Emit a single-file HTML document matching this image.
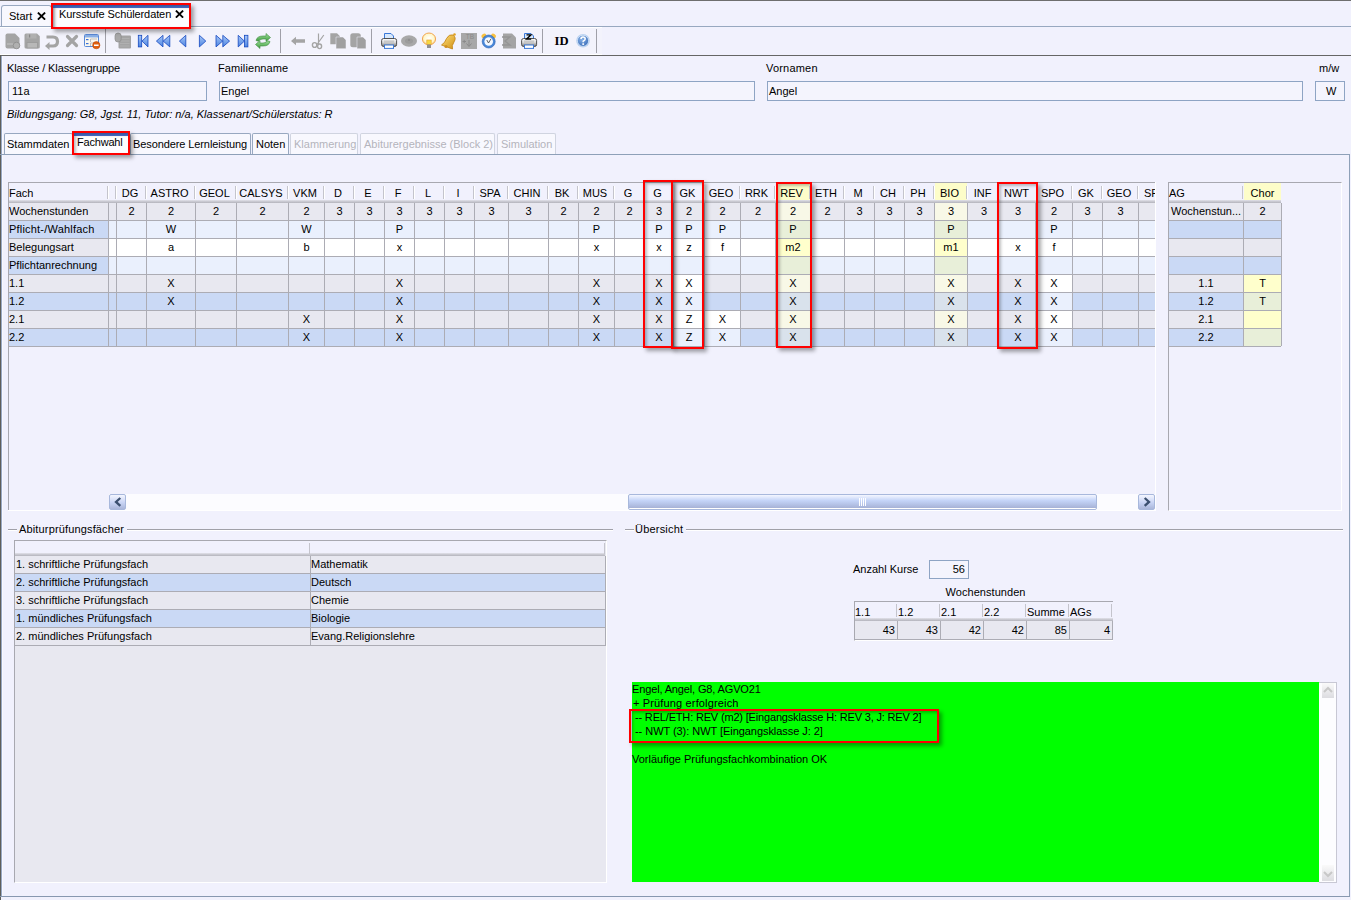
<!DOCTYPE html>
<html><head><meta charset="utf-8"><style>
html,body{margin:0;padding:0}
body{width:1351px;height:900px;position:relative;overflow:hidden;background:#f1f1fd;font-family:'Liberation Sans', sans-serif;font-size:11px;color:#000}
body div, body svg{position:absolute}
.t{white-space:nowrap;line-height:13px;height:13px}
</style></head><body>
<div style="left:0px;top:0px;width:1351px;height:1px;background:#6e6e6e;"></div>
<div style="left:0px;top:26px;width:1351px;height:1px;background:#98a8c0;"></div>
<div style="left:1px;top:5px;width:51px;height:21px;background:#f8f8fe;border:1px solid #98a8c0;border-bottom:none;border-radius:3px 3px 0 0;box-sizing:border-box"></div>
<div class="t" style="left:9px;top:10px;">Start</div>
<svg style="left:37px;top:12px" width="9" height="8" viewBox="0 0 9 8"><path d="M0.9 0.6L8.1 7.6M8.1 0.6L0.9 7.6" stroke="#000" stroke-width="1.9"/></svg>
<div style="left:53px;top:5px;width:136px;height:22px;background:#fdfdff;border-top:3px solid #4a70d0;box-sizing:border-box;box-shadow:inset 3px 0 3px -2px rgba(0,0,0,.25)"></div>
<div class="t" style="left:59px;top:8px;letter-spacing:-0.1px">Kursstufe Schülerdaten</div>
<svg style="left:175px;top:10px" width="9" height="8" viewBox="0 0 9 8"><path d="M0.9 0.6L8.1 7.6M8.1 0.6L0.9 7.6" stroke="#000" stroke-width="1.9"/></svg>
<div style="left:0px;top:27px;width:602px;height:28px;background:#f3f3fc;"></div>
<div style="left:0px;top:27px;width:602px;height:1px;background:#ffffff;"></div>
<div style="left:0px;top:54px;width:602px;height:1px;background:#ffffff;"></div>
<div style="left:0px;top:55px;width:1351px;height:1px;background:#666;"></div>
<div style="left:105px;top:29px;width:1px;height:24px;background:#a0a0a8;"></div>
<div style="left:280px;top:29px;width:1px;height:24px;background:#a0a0a8;"></div>
<div style="left:371px;top:29px;width:1px;height:24px;background:#a0a0a8;"></div>
<div style="left:542px;top:29px;width:1px;height:24px;background:#a0a0a8;"></div>
<div style="left:596px;top:29px;width:1px;height:24px;background:#a0a0a8;"></div>
<svg style="left:0;top:0" width="620" height="56" viewBox="0 0 620 56"><defs><linearGradient id="bl" x1="0" y1="0" x2="0" y2="1"><stop offset="0" stop-color="#a8c8f8"/><stop offset="1" stop-color="#4c84e0"/></linearGradient><linearGradient id="gr" x1="0" y1="0" x2="0" y2="1"><stop offset="0" stop-color="#9ee09a"/><stop offset="1" stop-color="#3c9a3c"/></linearGradient><radialGradient id="bulb" cx="0.5" cy="0.45" r="0.55"><stop offset="0" stop-color="#ffffff"/><stop offset="0.7" stop-color="#fff6c8"/><stop offset="1" stop-color="#f8c870"/></radialGradient><linearGradient id="gold" x1="0" y1="0" x2="1" y2="1"><stop offset="0" stop-color="#ffe080"/><stop offset="1" stop-color="#d09010"/></linearGradient><linearGradient id="prn" x1="0" y1="0" x2="0" y2="1"><stop offset="0" stop-color="#ffffff"/><stop offset="0.5" stop-color="#d8d8d8"/><stop offset="1" stop-color="#707070"/></linearGradient><radialGradient id="help" cx="0.4" cy="0.35" r="0.7"><stop offset="0" stop-color="#8ab4e8"/><stop offset="1" stop-color="#3a6cb8"/></radialGradient></defs><path d="M5.5 35.5 Q5.5 33.5 7.5 33.5 H15 L19.5 38 V46.5 Q19.5 48.5 17.5 48.5 H7.5 Q5.5 48.5 5.5 46.5 Z" fill="#a4a4a4"/><rect x="7" y="43" width="7" height="2" fill="#b4b4b4"/><circle cx="16.5" cy="45.5" r="3.3" fill="#b0b0b0" stroke="#8c8c8c" stroke-width="0.8"/><path d="M24.5 35 Q24.5 33.5 26 33.5 H37 L39.8 36.3 V47 Q39.8 48.6 38.3 48.6 H26 Q24.5 48.6 24.5 47 Z" fill="#a4a4a4"/><rect x="26.5" y="34" width="10" height="4.5" fill="#b0b0b0"/><rect x="29" y="34.5" width="1.2" height="3" fill="#888"/><rect x="27" y="42.5" width="10.5" height="5.5" fill="#b8b8b8" stroke="#9a9a9a" stroke-width="0.8"/><path d="M46.5 37 H53 Q57.5 37 57.5 41.5 Q57.5 46 53 46 H48.5" stroke="#a4a4a4" stroke-width="3.2" fill="none"/><path d="M45 46 L49.5 42 V50 Z" fill="#a4a4a4"/><path d="M67.5 36.5 L76.5 45.5 M76.5 36.5 L67.5 45.5" stroke="#a4a4a4" stroke-width="3.2" stroke-linecap="round"/><rect x="84.5" y="34.5" width="14" height="12" rx="1" fill="#fbf8ee" stroke="#5a8ad8" stroke-width="1"/><rect x="85" y="35" width="13" height="2.5" fill="#8ab0e8"/><rect x="86" y="39" width="2.5" height="1.2" fill="#3a70d8"/><rect x="86" y="43" width="2.5" height="1.2" fill="#3a70d8"/><path d="M90.5 42 V39 H97" stroke="#b8b8b8" stroke-width="0.9" fill="none"/><path d="M90.5 46 V43 H94" stroke="#b8b8b8" stroke-width="0.9" fill="none"/><circle cx="96.3" cy="45.2" r="3.6" fill="#e06010" stroke="#c04800" stroke-width="0.6"/><rect x="94" y="44.5" width="4.6" height="1.5" fill="#fff"/><rect x="118.5" y="35.5" width="12.5" height="13" rx="1" fill="#a4a4a4"/><path d="M120 38.5H129.5M120 41H129.5M120 43.5H129.5M120 46H129.5" stroke="#b4b4b4" stroke-width="0.8"/><rect x="115" y="33" width="6.2" height="9" rx="3" fill="#a8a8a8" stroke="#8c8c8c" stroke-width="0.7"/><rect x="138.3" y="35.3" width="3.4" height="11.6" fill="url(#bl)" stroke="#1448c0" stroke-width="0.8"/><path d="M148 35.3 V46.9 L142 41.1 Z" fill="url(#bl)" stroke="#1448c0" stroke-width="0.8" stroke-linejoin="round"/><path d="M163 35.3 V46.9 L156.4 41.1 Z M169.8 35.3 V46.9 L163.2 41.1 Z" fill="url(#bl)" stroke="#1448c0" stroke-width="0.8" stroke-linejoin="round"/><path d="M185.8 35.3 V46.9 L179.4 41.1 Z" fill="url(#bl)" stroke="#1448c0" stroke-width="0.8" stroke-linejoin="round"/><path d="M199.4 35.3 V46.9 L205.8 41.1 Z" fill="url(#bl)" stroke="#1448c0" stroke-width="0.8" stroke-linejoin="round"/><path d="M216 35.3 V46.9 L222.6 41.1 Z M222.8 35.3 V46.9 L229.6 41.1 Z" fill="url(#bl)" stroke="#1448c0" stroke-width="0.8" stroke-linejoin="round"/><path d="M238.2 35.3 V46.9 L244.4 41.1 Z" fill="url(#bl)" stroke="#1448c0" stroke-width="0.8" stroke-linejoin="round"/><rect x="244.5" y="35.3" width="3.4" height="11.6" fill="url(#bl)" stroke="#1448c0" stroke-width="0.8"/><path d="M256 40.5 Q257 36 263 36 H266 V33.5 L270.5 37.5 L266 41.5 V39 H263 Q259.5 39 258.5 41.2 Z" fill="url(#gr)" stroke="#3c8a3c" stroke-width="0.6"/><path d="M270 41.5 Q269 46 263 46 H260 V48.5 L255.5 44.5 L260 40.5 V43 H263 Q266.5 43 267.5 40.8 Z" fill="url(#gr)" stroke="#3c8a3c" stroke-width="0.6"/><path d="M291 41 L296 36.8 V39.2 H305 V42.8 H296 V45.2 Z" fill="#a4a4a4"/><path d="M318.5 33.5 V44 M323.8 35 L317 44.5" stroke="#a4a4a4" stroke-width="1.2" fill="none"/><ellipse cx="314.6" cy="45" rx="2.2" ry="2.4" fill="none" stroke="#a4a4a4" stroke-width="1.4"/><ellipse cx="319.6" cy="46.3" rx="2" ry="2.3" fill="none" stroke="#a4a4a4" stroke-width="1.4"/><path d="M330.3 33.3 H337 L340 36.3 V44.3 H330.3 Z" fill="#a4a4a4"/><path d="M336 37 H343 L346 40 V48.7 H336 Z" fill="#a0a0a0" stroke="#f2f2fc" stroke-width="0.5"/><rect x="350.3" y="33.3" width="10.5" height="14" rx="2.5" fill="#a4a4a4"/><path d="M357 37 H363 L366 40 V48.7 H357 Z" fill="#a0a0a0" stroke="#f2f2fc" stroke-width="0.5"/><path d="M384.5 33.5 H391 L393.5 36 V41 H384.5 Z" fill="#d8e8fc" stroke="#3a78d8" stroke-width="1"/><rect x="381.6" y="38.5" width="15" height="8" rx="2" fill="url(#prn)" stroke="#404040" stroke-width="0.9"/><rect x="384" y="40.5" width="10" height="2.5" fill="#c8c8c8"/><rect x="384.5" y="45" width="9" height="3.4" fill="#ffffff" stroke="#3a78d8" stroke-width="1"/><ellipse cx="409" cy="41" rx="8" ry="5.8" fill="#a8a8a8"/><ellipse cx="409" cy="41" rx="4" ry="2.8" fill="#9c9c9c"/><circle cx="409" cy="40" r="0.8" fill="#808080"/><ellipse cx="429" cy="39" rx="6.6" ry="6" fill="url(#bulb)" stroke="#f0a048" stroke-width="0.9"/><rect x="426.8" y="40" width="4.4" height="4.5" fill="#f8d840" stroke="#e8a030" stroke-width="0.6"/><rect x="427" y="44.5" width="4" height="3.5" fill="#909090"/><path d="M441.5 45 Q445 43 446.5 38.5 Q449 33.8 453 35 Q456.8 37.5 454 42 Q451.5 45.5 452.5 49 Z" fill="url(#gold)" stroke="#c08010" stroke-width="0.8"/><circle cx="454.5" cy="34.5" r="1.3" fill="#e0a020"/><circle cx="446" cy="46.5" r="1.6" fill="#d09020"/><rect x="461" y="33" width="16" height="16" fill="#a8a8a8"/><text x="470" y="39.3" font-family="Liberation Sans" font-size="6.5" text-anchor="middle" fill="#888">TB</text><path d="M469 40 V46 M466.5 43.5 L469 46.5 L471.5 43.5 M462.5 41.5 H466 M464.2 39.8 V43.2" stroke="#8a8a8a" stroke-width="1" fill="none"/><ellipse cx="483.8" cy="35.8" rx="2.6" ry="2" fill="#f8c040" transform="rotate(-35 483.8 35.8)"/><ellipse cx="493.6" cy="35.8" rx="2.6" ry="2" fill="#f8c040" transform="rotate(35 493.6 35.8)"/><circle cx="488.7" cy="41.5" r="6.5" fill="#4a88d8" stroke="#2a60b0" stroke-width="0.6"/><circle cx="488.7" cy="41.5" r="4.3" fill="#f4f8ff"/><path d="M486.8 40 L488.5 43 L491 38.8" stroke="#505050" stroke-width="0.9" fill="none"/><path d="M503 33.5 H512 L516 37.5 V48.5 H503 Z" fill="#a4a4a4"/><path d="M502 37 H510 L505 41 L510 45 H502" stroke="#949494" stroke-width="1.3" fill="none"/><path d="M524.5 33.5 H531 L533.5 36 V41 H524.5 Z" fill="#d8e8fc" stroke="#3a78d8" stroke-width="1"/><rect x="521.6" y="38.5" width="15" height="8" rx="2" fill="url(#prn)" stroke="#404040" stroke-width="0.9"/><path d="M526.5 34.8 H531 L526.5 39.2 H531.2" stroke="#000" stroke-width="1.3" fill="none"/><rect x="524" y="40.5" width="10" height="2.5" fill="#c8c8c8"/><rect x="524.5" y="45" width="9" height="3.4" fill="#ffffff" stroke="#3a78d8" stroke-width="1"/><text x="554.6" y="45.4" font-family="Liberation Serif" font-weight="bold" font-size="12.6" fill="#000">ID</text><circle cx="583" cy="40.8" r="6.8" fill="#b8d0f0"/><circle cx="583" cy="40.8" r="5.6" fill="url(#help)" stroke="#d8e8fa" stroke-width="0.8"/><path d="M581 39 Q581 37 583 37 Q585.2 37 585.2 39 Q585.2 40.3 583.2 41.2 V42.3" stroke="#fff" stroke-width="1.5" fill="none"/><rect x="582.3" y="43.3" width="1.8" height="1.6" fill="#fff"/></svg>
<div style="left:0px;top:55px;width:1px;height:845px;background:#5e5e5a;"></div>
<div style="left:1px;top:56px;width:1px;height:840px;background:#98a8c4;"></div>
<div style="left:2px;top:56px;width:1px;height:840px;background:#f8f8ff;"></div>
<div class="t" style="left:7px;top:62px;letter-spacing:-0.12px">Klasse / Klassengruppe</div>
<div class="t" style="left:218px;top:62px;letter-spacing:0.1px">Familienname</div>
<div class="t" style="left:766px;top:62px;letter-spacing:0.2px">Vornamen</div>
<div class="t" style="left:1319px;top:62px;">m/w</div>
<div style="left:8px;top:81px;width:199px;height:20px;border:1px solid #8ea4c4;box-sizing:border-box;background:#f4f4fd"></div>
<div style="left:219px;top:81px;width:536px;height:20px;border:1px solid #8ea4c4;box-sizing:border-box;background:#f4f4fd"></div>
<div style="left:767px;top:81px;width:536px;height:20px;border:1px solid #8ea4c4;box-sizing:border-box;background:#f4f4fd"></div>
<div style="left:1315px;top:81px;width:30px;height:20px;border:1px solid #8ea4c4;box-sizing:border-box;background:#f4f4fd"></div>
<div class="t" style="left:12px;top:85px;">11a</div>
<div class="t" style="left:221px;top:85px;">Engel</div>
<div class="t" style="left:769px;top:85px;">Angel</div>
<div class="t" style="left:1326px;top:85px;">W</div>
<div class="t" style="left:7px;top:108px;"><i>Bildungsgang: G8, Jgst. 11, Tutor: n/a, Klassenart/Schülerstatus: R</i></div>
<div style="left:0px;top:154px;width:1350px;height:1px;background:#8ea0b8;"></div>
<div style="left:1349px;top:154px;width:1px;height:743px;background:#8ea0b8;"></div>
<div style="left:0px;top:896px;width:1350px;height:1px;background:#8898b0;"></div>
<div style="left:4px;top:133px;width:69px;height:21px;border:1px solid #98a8c0;border-bottom:none;border-radius:2px 2px 0 0;box-sizing:border-box;background:#f8f8fe"></div>
<div style="left:130px;top:133px;width:121px;height:21px;border:1px solid #98a8c0;border-bottom:none;border-radius:2px 2px 0 0;box-sizing:border-box;background:#f8f8fe"></div>
<div style="left:252px;top:133px;width:37px;height:21px;border:1px solid #98a8c0;border-bottom:none;border-radius:2px 2px 0 0;box-sizing:border-box;background:#f8f8fe"></div>
<div style="left:290px;top:133px;width:68px;height:21px;border:1px solid #d0d4e0;border-bottom:none;border-radius:2px 2px 0 0;box-sizing:border-box;background:#f8f8fe"></div>
<div style="left:360px;top:133px;width:135px;height:21px;border:1px solid #d0d4e0;border-bottom:none;border-radius:2px 2px 0 0;box-sizing:border-box;background:#f8f8fe"></div>
<div style="left:497px;top:133px;width:59px;height:21px;border:1px solid #d0d4e0;border-bottom:none;border-radius:2px 2px 0 0;box-sizing:border-box;background:#f8f8fe"></div>
<div style="left:74px;top:133px;width:55px;height:22px;background:#fdfdff;border-top:3px solid #4a70d0;box-sizing:border-box"></div>
<div class="t" style="left:7px;top:138px;">Stammdaten</div>
<div class="t" style="left:77px;top:136px;letter-spacing:-0.2px">Fachwahl</div>
<div class="t" style="left:133px;top:138px;letter-spacing:-0.1px">Besondere Lernleistung</div>
<div class="t" style="left:256px;top:138px;">Noten</div>
<div class="t" style="left:294px;top:138px;color:#b4b4bc">Klammerung</div>
<div class="t" style="left:364px;top:138px;color:#b4b4bc">Abiturergebnisse (Block 2)</div>
<div class="t" style="left:501px;top:138px;color:#b4b4bc">Simulation</div>
<div style="left:8px;top:182px;width:1147px;height:328px;overflow:hidden;background:#f1f1fd">
<div style="left:0px;top:0px;width:1147px;height:18px;background:#f1f1fd;"></div>
<div style="left:0;top:18px;width:1147px;height:3px;background:linear-gradient(#e2e2ea,#c4c4cc 60%,#b4b4bc)"></div>
<div style="left:0px;top:21px;width:100px;height:17px;background:#e8e8f0"></div>
<div class="t" style="left:1px;top:23px">Wochenstunden</div>
<div style="left:0px;top:39px;width:100px;height:17px;background:#cad9f5"></div>
<div class="t" style="left:1px;top:41px"><span style="letter-spacing:0.2px">Pflicht-/Wahlfach</span></div>
<div style="left:0px;top:57px;width:100px;height:17px;background:#e8e8f0"></div>
<div class="t" style="left:1px;top:59px">Belegungsart</div>
<div style="left:0px;top:75px;width:100px;height:17px;background:#cad9f5"></div>
<div class="t" style="left:1px;top:77px">Pflichtanrechnung</div>
<div style="left:0px;top:93px;width:100px;height:17px;background:#e8e8f0"></div>
<div class="t" style="left:1px;top:95px">1.1</div>
<div style="left:0px;top:111px;width:100px;height:17px;background:#cad9f5"></div>
<div class="t" style="left:1px;top:113px">1.2</div>
<div style="left:0px;top:129px;width:100px;height:17px;background:#e8e8f0"></div>
<div class="t" style="left:1px;top:131px">2.1</div>
<div style="left:0px;top:147px;width:100px;height:17px;background:#cad9f5"></div>
<div class="t" style="left:1px;top:149px">2.2</div>
<div class="t" style="left:1px;top:5px">Fach</div>
<div style="left:99px;top:4px;width:1px;height:13px;background:#c4c4cc"></div>
<div style="left:100px;top:4px;width:1px;height:13px;background:#ffffff"></div>
<div style="left:100px;top:21px;width:8px;height:17px;background:#e8e8f0"></div>
<div style="left:100px;top:39px;width:8px;height:17px;background:#eaf0fd"></div>
<div style="left:100px;top:57px;width:8px;height:17px;background:#ffffff"></div>
<div style="left:100px;top:75px;width:8px;height:17px;background:#eaf0fd"></div>
<div style="left:100px;top:93px;width:8px;height:17px;background:#e8e8f0"></div>
<div style="left:100px;top:111px;width:8px;height:17px;background:#cad9f5"></div>
<div style="left:100px;top:129px;width:8px;height:17px;background:#e8e8f0"></div>
<div style="left:100px;top:147px;width:8px;height:17px;background:#cad9f5"></div>
<div style="left:107px;top:4px;width:1px;height:13px;background:#c4c4cc"></div>
<div style="left:108px;top:4px;width:1px;height:13px;background:#ffffff"></div>
<div style="left:108px;top:21px;width:30px;height:17px;background:#e8e8f0"></div>
<div class="t" style="left:109px;top:23px;width:29px;text-align:center;">2</div>
<div style="left:108px;top:39px;width:30px;height:17px;background:#eaf0fd"></div>
<div style="left:108px;top:57px;width:30px;height:17px;background:#ffffff"></div>
<div style="left:108px;top:75px;width:30px;height:17px;background:#eaf0fd"></div>
<div style="left:108px;top:93px;width:30px;height:17px;background:#e8e8f0"></div>
<div style="left:108px;top:111px;width:30px;height:17px;background:#cad9f5"></div>
<div style="left:108px;top:129px;width:30px;height:17px;background:#e8e8f0"></div>
<div style="left:108px;top:147px;width:30px;height:17px;background:#cad9f5"></div>
<div class="t" style="left:107px;top:5px;width:30px;text-align:center;">DG</div>
<div style="left:137px;top:4px;width:1px;height:13px;background:#c4c4cc"></div>
<div style="left:138px;top:4px;width:1px;height:13px;background:#ffffff"></div>
<div style="left:138px;top:21px;width:49px;height:17px;background:#e8e8f0"></div>
<div class="t" style="left:139px;top:23px;width:48px;text-align:center;">2</div>
<div style="left:138px;top:39px;width:49px;height:17px;background:#eaf0fd"></div>
<div class="t" style="left:139px;top:41px;width:48px;text-align:center;">W</div>
<div style="left:138px;top:57px;width:49px;height:17px;background:#ffffff"></div>
<div class="t" style="left:139px;top:59px;width:48px;text-align:center;">a</div>
<div style="left:138px;top:75px;width:49px;height:17px;background:#eaf0fd"></div>
<div style="left:138px;top:93px;width:49px;height:17px;background:#e8e8f0"></div>
<div class="t" style="left:139px;top:95px;width:48px;text-align:center;">X</div>
<div style="left:138px;top:111px;width:49px;height:17px;background:#cad9f5"></div>
<div class="t" style="left:139px;top:113px;width:48px;text-align:center;">X</div>
<div style="left:138px;top:129px;width:49px;height:17px;background:#e8e8f0"></div>
<div style="left:138px;top:147px;width:49px;height:17px;background:#cad9f5"></div>
<div class="t" style="left:137px;top:5px;width:49px;text-align:center;">ASTRO</div>
<div style="left:186px;top:4px;width:1px;height:13px;background:#c4c4cc"></div>
<div style="left:187px;top:4px;width:1px;height:13px;background:#ffffff"></div>
<div style="left:187px;top:21px;width:41px;height:17px;background:#e8e8f0"></div>
<div class="t" style="left:188px;top:23px;width:40px;text-align:center;">2</div>
<div style="left:187px;top:39px;width:41px;height:17px;background:#eaf0fd"></div>
<div style="left:187px;top:57px;width:41px;height:17px;background:#ffffff"></div>
<div style="left:187px;top:75px;width:41px;height:17px;background:#eaf0fd"></div>
<div style="left:187px;top:93px;width:41px;height:17px;background:#e8e8f0"></div>
<div style="left:187px;top:111px;width:41px;height:17px;background:#cad9f5"></div>
<div style="left:187px;top:129px;width:41px;height:17px;background:#e8e8f0"></div>
<div style="left:187px;top:147px;width:41px;height:17px;background:#cad9f5"></div>
<div class="t" style="left:186px;top:5px;width:41px;text-align:center;">GEOL</div>
<div style="left:227px;top:4px;width:1px;height:13px;background:#c4c4cc"></div>
<div style="left:228px;top:4px;width:1px;height:13px;background:#ffffff"></div>
<div style="left:228px;top:21px;width:52px;height:17px;background:#e8e8f0"></div>
<div class="t" style="left:229px;top:23px;width:51px;text-align:center;">2</div>
<div style="left:228px;top:39px;width:52px;height:17px;background:#eaf0fd"></div>
<div style="left:228px;top:57px;width:52px;height:17px;background:#ffffff"></div>
<div style="left:228px;top:75px;width:52px;height:17px;background:#eaf0fd"></div>
<div style="left:228px;top:93px;width:52px;height:17px;background:#e8e8f0"></div>
<div style="left:228px;top:111px;width:52px;height:17px;background:#cad9f5"></div>
<div style="left:228px;top:129px;width:52px;height:17px;background:#e8e8f0"></div>
<div style="left:228px;top:147px;width:52px;height:17px;background:#cad9f5"></div>
<div class="t" style="left:227px;top:5px;width:52px;text-align:center;">CALSYS</div>
<div style="left:279px;top:4px;width:1px;height:13px;background:#c4c4cc"></div>
<div style="left:280px;top:4px;width:1px;height:13px;background:#ffffff"></div>
<div style="left:280px;top:21px;width:36px;height:17px;background:#e8e8f0"></div>
<div class="t" style="left:281px;top:23px;width:35px;text-align:center;">2</div>
<div style="left:280px;top:39px;width:36px;height:17px;background:#eaf0fd"></div>
<div class="t" style="left:281px;top:41px;width:35px;text-align:center;">W</div>
<div style="left:280px;top:57px;width:36px;height:17px;background:#ffffff"></div>
<div class="t" style="left:281px;top:59px;width:35px;text-align:center;">b</div>
<div style="left:280px;top:75px;width:36px;height:17px;background:#eaf0fd"></div>
<div style="left:280px;top:93px;width:36px;height:17px;background:#e8e8f0"></div>
<div style="left:280px;top:111px;width:36px;height:17px;background:#cad9f5"></div>
<div style="left:280px;top:129px;width:36px;height:17px;background:#e8e8f0"></div>
<div class="t" style="left:281px;top:131px;width:35px;text-align:center;">X</div>
<div style="left:280px;top:147px;width:36px;height:17px;background:#cad9f5"></div>
<div class="t" style="left:281px;top:149px;width:35px;text-align:center;">X</div>
<div class="t" style="left:279px;top:5px;width:36px;text-align:center;">VKM</div>
<div style="left:315px;top:4px;width:1px;height:13px;background:#c4c4cc"></div>
<div style="left:316px;top:4px;width:1px;height:13px;background:#ffffff"></div>
<div style="left:316px;top:21px;width:30px;height:17px;background:#e8e8f0"></div>
<div class="t" style="left:317px;top:23px;width:29px;text-align:center;">3</div>
<div style="left:316px;top:39px;width:30px;height:17px;background:#eaf0fd"></div>
<div style="left:316px;top:57px;width:30px;height:17px;background:#ffffff"></div>
<div style="left:316px;top:75px;width:30px;height:17px;background:#eaf0fd"></div>
<div style="left:316px;top:93px;width:30px;height:17px;background:#e8e8f0"></div>
<div style="left:316px;top:111px;width:30px;height:17px;background:#cad9f5"></div>
<div style="left:316px;top:129px;width:30px;height:17px;background:#e8e8f0"></div>
<div style="left:316px;top:147px;width:30px;height:17px;background:#cad9f5"></div>
<div class="t" style="left:315px;top:5px;width:30px;text-align:center;">D</div>
<div style="left:345px;top:4px;width:1px;height:13px;background:#c4c4cc"></div>
<div style="left:346px;top:4px;width:1px;height:13px;background:#ffffff"></div>
<div style="left:346px;top:21px;width:30px;height:17px;background:#e8e8f0"></div>
<div class="t" style="left:347px;top:23px;width:29px;text-align:center;">3</div>
<div style="left:346px;top:39px;width:30px;height:17px;background:#eaf0fd"></div>
<div style="left:346px;top:57px;width:30px;height:17px;background:#ffffff"></div>
<div style="left:346px;top:75px;width:30px;height:17px;background:#eaf0fd"></div>
<div style="left:346px;top:93px;width:30px;height:17px;background:#e8e8f0"></div>
<div style="left:346px;top:111px;width:30px;height:17px;background:#cad9f5"></div>
<div style="left:346px;top:129px;width:30px;height:17px;background:#e8e8f0"></div>
<div style="left:346px;top:147px;width:30px;height:17px;background:#cad9f5"></div>
<div class="t" style="left:345px;top:5px;width:30px;text-align:center;">E</div>
<div style="left:375px;top:4px;width:1px;height:13px;background:#c4c4cc"></div>
<div style="left:376px;top:4px;width:1px;height:13px;background:#ffffff"></div>
<div style="left:376px;top:21px;width:30px;height:17px;background:#e8e8f0"></div>
<div class="t" style="left:377px;top:23px;width:29px;text-align:center;">3</div>
<div style="left:376px;top:39px;width:30px;height:17px;background:#eaf0fd"></div>
<div class="t" style="left:377px;top:41px;width:29px;text-align:center;">P</div>
<div style="left:376px;top:57px;width:30px;height:17px;background:#ffffff"></div>
<div class="t" style="left:377px;top:59px;width:29px;text-align:center;">x</div>
<div style="left:376px;top:75px;width:30px;height:17px;background:#eaf0fd"></div>
<div style="left:376px;top:93px;width:30px;height:17px;background:#e8e8f0"></div>
<div class="t" style="left:377px;top:95px;width:29px;text-align:center;">X</div>
<div style="left:376px;top:111px;width:30px;height:17px;background:#cad9f5"></div>
<div class="t" style="left:377px;top:113px;width:29px;text-align:center;">X</div>
<div style="left:376px;top:129px;width:30px;height:17px;background:#e8e8f0"></div>
<div class="t" style="left:377px;top:131px;width:29px;text-align:center;">X</div>
<div style="left:376px;top:147px;width:30px;height:17px;background:#cad9f5"></div>
<div class="t" style="left:377px;top:149px;width:29px;text-align:center;">X</div>
<div class="t" style="left:375px;top:5px;width:30px;text-align:center;">F</div>
<div style="left:405px;top:4px;width:1px;height:13px;background:#c4c4cc"></div>
<div style="left:406px;top:4px;width:1px;height:13px;background:#ffffff"></div>
<div style="left:406px;top:21px;width:30px;height:17px;background:#e8e8f0"></div>
<div class="t" style="left:407px;top:23px;width:29px;text-align:center;">3</div>
<div style="left:406px;top:39px;width:30px;height:17px;background:#eaf0fd"></div>
<div style="left:406px;top:57px;width:30px;height:17px;background:#ffffff"></div>
<div style="left:406px;top:75px;width:30px;height:17px;background:#eaf0fd"></div>
<div style="left:406px;top:93px;width:30px;height:17px;background:#e8e8f0"></div>
<div style="left:406px;top:111px;width:30px;height:17px;background:#cad9f5"></div>
<div style="left:406px;top:129px;width:30px;height:17px;background:#e8e8f0"></div>
<div style="left:406px;top:147px;width:30px;height:17px;background:#cad9f5"></div>
<div class="t" style="left:405px;top:5px;width:30px;text-align:center;">L</div>
<div style="left:435px;top:4px;width:1px;height:13px;background:#c4c4cc"></div>
<div style="left:436px;top:4px;width:1px;height:13px;background:#ffffff"></div>
<div style="left:436px;top:21px;width:30px;height:17px;background:#e8e8f0"></div>
<div class="t" style="left:437px;top:23px;width:29px;text-align:center;">3</div>
<div style="left:436px;top:39px;width:30px;height:17px;background:#eaf0fd"></div>
<div style="left:436px;top:57px;width:30px;height:17px;background:#ffffff"></div>
<div style="left:436px;top:75px;width:30px;height:17px;background:#eaf0fd"></div>
<div style="left:436px;top:93px;width:30px;height:17px;background:#e8e8f0"></div>
<div style="left:436px;top:111px;width:30px;height:17px;background:#cad9f5"></div>
<div style="left:436px;top:129px;width:30px;height:17px;background:#e8e8f0"></div>
<div style="left:436px;top:147px;width:30px;height:17px;background:#cad9f5"></div>
<div class="t" style="left:435px;top:5px;width:30px;text-align:center;">I</div>
<div style="left:465px;top:4px;width:1px;height:13px;background:#c4c4cc"></div>
<div style="left:466px;top:4px;width:1px;height:13px;background:#ffffff"></div>
<div style="left:466px;top:21px;width:34px;height:17px;background:#e8e8f0"></div>
<div class="t" style="left:467px;top:23px;width:33px;text-align:center;">3</div>
<div style="left:466px;top:39px;width:34px;height:17px;background:#eaf0fd"></div>
<div style="left:466px;top:57px;width:34px;height:17px;background:#ffffff"></div>
<div style="left:466px;top:75px;width:34px;height:17px;background:#eaf0fd"></div>
<div style="left:466px;top:93px;width:34px;height:17px;background:#e8e8f0"></div>
<div style="left:466px;top:111px;width:34px;height:17px;background:#cad9f5"></div>
<div style="left:466px;top:129px;width:34px;height:17px;background:#e8e8f0"></div>
<div style="left:466px;top:147px;width:34px;height:17px;background:#cad9f5"></div>
<div class="t" style="left:465px;top:5px;width:34px;text-align:center;">SPA</div>
<div style="left:499px;top:4px;width:1px;height:13px;background:#c4c4cc"></div>
<div style="left:500px;top:4px;width:1px;height:13px;background:#ffffff"></div>
<div style="left:500px;top:21px;width:40px;height:17px;background:#e8e8f0"></div>
<div class="t" style="left:501px;top:23px;width:39px;text-align:center;">3</div>
<div style="left:500px;top:39px;width:40px;height:17px;background:#eaf0fd"></div>
<div style="left:500px;top:57px;width:40px;height:17px;background:#ffffff"></div>
<div style="left:500px;top:75px;width:40px;height:17px;background:#eaf0fd"></div>
<div style="left:500px;top:93px;width:40px;height:17px;background:#e8e8f0"></div>
<div style="left:500px;top:111px;width:40px;height:17px;background:#cad9f5"></div>
<div style="left:500px;top:129px;width:40px;height:17px;background:#e8e8f0"></div>
<div style="left:500px;top:147px;width:40px;height:17px;background:#cad9f5"></div>
<div class="t" style="left:499px;top:5px;width:40px;text-align:center;">CHIN</div>
<div style="left:539px;top:4px;width:1px;height:13px;background:#c4c4cc"></div>
<div style="left:540px;top:4px;width:1px;height:13px;background:#ffffff"></div>
<div style="left:540px;top:21px;width:30px;height:17px;background:#e8e8f0"></div>
<div class="t" style="left:541px;top:23px;width:29px;text-align:center;">2</div>
<div style="left:540px;top:39px;width:30px;height:17px;background:#eaf0fd"></div>
<div style="left:540px;top:57px;width:30px;height:17px;background:#ffffff"></div>
<div style="left:540px;top:75px;width:30px;height:17px;background:#eaf0fd"></div>
<div style="left:540px;top:93px;width:30px;height:17px;background:#e8e8f0"></div>
<div style="left:540px;top:111px;width:30px;height:17px;background:#cad9f5"></div>
<div style="left:540px;top:129px;width:30px;height:17px;background:#e8e8f0"></div>
<div style="left:540px;top:147px;width:30px;height:17px;background:#cad9f5"></div>
<div class="t" style="left:539px;top:5px;width:30px;text-align:center;">BK</div>
<div style="left:569px;top:4px;width:1px;height:13px;background:#c4c4cc"></div>
<div style="left:570px;top:4px;width:1px;height:13px;background:#ffffff"></div>
<div style="left:570px;top:21px;width:36px;height:17px;background:#e8e8f0"></div>
<div class="t" style="left:571px;top:23px;width:35px;text-align:center;">2</div>
<div style="left:570px;top:39px;width:36px;height:17px;background:#eaf0fd"></div>
<div class="t" style="left:571px;top:41px;width:35px;text-align:center;">P</div>
<div style="left:570px;top:57px;width:36px;height:17px;background:#ffffff"></div>
<div class="t" style="left:571px;top:59px;width:35px;text-align:center;">x</div>
<div style="left:570px;top:75px;width:36px;height:17px;background:#eaf0fd"></div>
<div style="left:570px;top:93px;width:36px;height:17px;background:#e8e8f0"></div>
<div class="t" style="left:571px;top:95px;width:35px;text-align:center;">X</div>
<div style="left:570px;top:111px;width:36px;height:17px;background:#cad9f5"></div>
<div class="t" style="left:571px;top:113px;width:35px;text-align:center;">X</div>
<div style="left:570px;top:129px;width:36px;height:17px;background:#e8e8f0"></div>
<div class="t" style="left:571px;top:131px;width:35px;text-align:center;">X</div>
<div style="left:570px;top:147px;width:36px;height:17px;background:#cad9f5"></div>
<div class="t" style="left:571px;top:149px;width:35px;text-align:center;">X</div>
<div class="t" style="left:569px;top:5px;width:36px;text-align:center;">MUS</div>
<div style="left:605px;top:4px;width:1px;height:13px;background:#c4c4cc"></div>
<div style="left:606px;top:4px;width:1px;height:13px;background:#ffffff"></div>
<div style="left:606px;top:21px;width:30px;height:17px;background:#e8e8f0"></div>
<div class="t" style="left:607px;top:23px;width:29px;text-align:center;">2</div>
<div style="left:606px;top:39px;width:30px;height:17px;background:#eaf0fd"></div>
<div style="left:606px;top:57px;width:30px;height:17px;background:#ffffff"></div>
<div style="left:606px;top:75px;width:30px;height:17px;background:#eaf0fd"></div>
<div style="left:606px;top:93px;width:30px;height:17px;background:#e8e8f0"></div>
<div style="left:606px;top:111px;width:30px;height:17px;background:#cad9f5"></div>
<div style="left:606px;top:129px;width:30px;height:17px;background:#e8e8f0"></div>
<div style="left:606px;top:147px;width:30px;height:17px;background:#cad9f5"></div>
<div class="t" style="left:605px;top:5px;width:30px;text-align:center;">G</div>
<div style="left:635px;top:4px;width:1px;height:13px;background:#c4c4cc"></div>
<div style="left:636px;top:4px;width:1px;height:13px;background:#ffffff"></div>
<div style="left:636px;top:21px;width:29px;height:17px;background:#e8e8f0"></div>
<div class="t" style="left:637px;top:23px;width:28px;text-align:center;">3</div>
<div style="left:636px;top:39px;width:29px;height:17px;background:#eaf0fd"></div>
<div class="t" style="left:637px;top:41px;width:28px;text-align:center;">P</div>
<div style="left:636px;top:57px;width:29px;height:17px;background:#ffffff"></div>
<div class="t" style="left:637px;top:59px;width:28px;text-align:center;">x</div>
<div style="left:636px;top:75px;width:29px;height:17px;background:#eaf0fd"></div>
<div style="left:636px;top:93px;width:29px;height:17px;background:#e8e8f0"></div>
<div class="t" style="left:637px;top:95px;width:28px;text-align:center;">X</div>
<div style="left:636px;top:111px;width:29px;height:17px;background:#cad9f5"></div>
<div class="t" style="left:637px;top:113px;width:28px;text-align:center;">X</div>
<div style="left:636px;top:129px;width:29px;height:17px;background:#e8e8f0"></div>
<div class="t" style="left:637px;top:131px;width:28px;text-align:center;">X</div>
<div style="left:636px;top:147px;width:29px;height:17px;background:#cad9f5"></div>
<div class="t" style="left:637px;top:149px;width:28px;text-align:center;">X</div>
<div class="t" style="left:635px;top:5px;width:29px;text-align:center;">G</div>
<div style="left:664px;top:4px;width:1px;height:13px;background:#c4c4cc"></div>
<div style="left:665px;top:4px;width:1px;height:13px;background:#ffffff"></div>
<div style="left:665px;top:21px;width:31px;height:17px;background:#e8e8f0"></div>
<div class="t" style="left:666px;top:23px;width:30px;text-align:center;">2</div>
<div style="left:665px;top:39px;width:31px;height:17px;background:#eaf0fd"></div>
<div class="t" style="left:666px;top:41px;width:30px;text-align:center;">P</div>
<div style="left:665px;top:57px;width:31px;height:17px;background:#ffffff"></div>
<div class="t" style="left:666px;top:59px;width:30px;text-align:center;">z</div>
<div style="left:665px;top:75px;width:31px;height:17px;background:#eaf0fd"></div>
<div style="left:665px;top:93px;width:31px;height:17px;background:#ffffff"></div>
<div class="t" style="left:666px;top:95px;width:30px;text-align:center;">X</div>
<div style="left:665px;top:111px;width:31px;height:17px;background:#eaf0fd"></div>
<div class="t" style="left:666px;top:113px;width:30px;text-align:center;">X</div>
<div style="left:665px;top:129px;width:31px;height:17px;background:#ffffff"></div>
<div class="t" style="left:666px;top:131px;width:30px;text-align:center;">Z</div>
<div style="left:665px;top:147px;width:31px;height:17px;background:#eaf0fd"></div>
<div class="t" style="left:666px;top:149px;width:30px;text-align:center;">Z</div>
<div class="t" style="left:664px;top:5px;width:31px;text-align:center;">GK</div>
<div style="left:695px;top:4px;width:1px;height:13px;background:#c4c4cc"></div>
<div style="left:696px;top:4px;width:1px;height:13px;background:#ffffff"></div>
<div style="left:696px;top:21px;width:36px;height:17px;background:#e8e8f0"></div>
<div class="t" style="left:697px;top:23px;width:35px;text-align:center;">2</div>
<div style="left:696px;top:39px;width:36px;height:17px;background:#eaf0fd"></div>
<div class="t" style="left:697px;top:41px;width:35px;text-align:center;">P</div>
<div style="left:696px;top:57px;width:36px;height:17px;background:#ffffff"></div>
<div class="t" style="left:697px;top:59px;width:35px;text-align:center;">f</div>
<div style="left:696px;top:75px;width:36px;height:17px;background:#eaf0fd"></div>
<div style="left:696px;top:93px;width:36px;height:17px;background:#e8e8f0"></div>
<div style="left:696px;top:111px;width:36px;height:17px;background:#cad9f5"></div>
<div style="left:696px;top:129px;width:36px;height:17px;background:#ffffff"></div>
<div class="t" style="left:697px;top:131px;width:35px;text-align:center;">X</div>
<div style="left:696px;top:147px;width:36px;height:17px;background:#eaf0fd"></div>
<div class="t" style="left:697px;top:149px;width:35px;text-align:center;">X</div>
<div class="t" style="left:695px;top:5px;width:36px;text-align:center;">GEO</div>
<div style="left:731px;top:4px;width:1px;height:13px;background:#c4c4cc"></div>
<div style="left:732px;top:4px;width:1px;height:13px;background:#ffffff"></div>
<div style="left:732px;top:21px;width:35px;height:17px;background:#e8e8f0"></div>
<div class="t" style="left:733px;top:23px;width:34px;text-align:center;">2</div>
<div style="left:732px;top:39px;width:35px;height:17px;background:#eaf0fd"></div>
<div style="left:732px;top:57px;width:35px;height:17px;background:#ffffff"></div>
<div style="left:732px;top:75px;width:35px;height:17px;background:#eaf0fd"></div>
<div style="left:732px;top:93px;width:35px;height:17px;background:#e8e8f0"></div>
<div style="left:732px;top:111px;width:35px;height:17px;background:#cad9f5"></div>
<div style="left:732px;top:129px;width:35px;height:17px;background:#e8e8f0"></div>
<div style="left:732px;top:147px;width:35px;height:17px;background:#cad9f5"></div>
<div class="t" style="left:731px;top:5px;width:35px;text-align:center;">RRK</div>
<div style="left:768px;top:1px;width:34px;height:17px;background:#fdfdc9"></div>
<div style="left:766px;top:4px;width:1px;height:13px;background:#c4c4cc"></div>
<div style="left:767px;top:4px;width:1px;height:13px;background:#ffffff"></div>
<div style="left:767px;top:21px;width:35px;height:17px;background:#f8f8e7"></div>
<div class="t" style="left:768px;top:23px;width:34px;text-align:center;">2</div>
<div style="left:767px;top:39px;width:35px;height:17px;background:#e8efd9"></div>
<div class="t" style="left:768px;top:41px;width:34px;text-align:center;">P</div>
<div style="left:767px;top:57px;width:35px;height:17px;background:#ffffcc"></div>
<div class="t" style="left:768px;top:59px;width:34px;text-align:center;">m2</div>
<div style="left:767px;top:75px;width:35px;height:17px;background:#e8efd9"></div>
<div style="left:767px;top:93px;width:35px;height:17px;background:#f8f8e7"></div>
<div class="t" style="left:768px;top:95px;width:34px;text-align:center;">X</div>
<div style="left:767px;top:111px;width:35px;height:17px;background:#d9e2ec"></div>
<div class="t" style="left:768px;top:113px;width:34px;text-align:center;">X</div>
<div style="left:767px;top:129px;width:35px;height:17px;background:#f8f8e7"></div>
<div class="t" style="left:768px;top:131px;width:34px;text-align:center;">X</div>
<div style="left:767px;top:147px;width:35px;height:17px;background:#d9e2ec"></div>
<div class="t" style="left:768px;top:149px;width:34px;text-align:center;">X</div>
<div class="t" style="left:766px;top:5px;width:35px;text-align:center;">REV</div>
<div style="left:801px;top:4px;width:1px;height:13px;background:#c4c4cc"></div>
<div style="left:802px;top:4px;width:1px;height:13px;background:#ffffff"></div>
<div style="left:802px;top:21px;width:34px;height:17px;background:#e8e8f0"></div>
<div class="t" style="left:803px;top:23px;width:33px;text-align:center;">2</div>
<div style="left:802px;top:39px;width:34px;height:17px;background:#eaf0fd"></div>
<div style="left:802px;top:57px;width:34px;height:17px;background:#ffffff"></div>
<div style="left:802px;top:75px;width:34px;height:17px;background:#eaf0fd"></div>
<div style="left:802px;top:93px;width:34px;height:17px;background:#e8e8f0"></div>
<div style="left:802px;top:111px;width:34px;height:17px;background:#cad9f5"></div>
<div style="left:802px;top:129px;width:34px;height:17px;background:#e8e8f0"></div>
<div style="left:802px;top:147px;width:34px;height:17px;background:#cad9f5"></div>
<div class="t" style="left:801px;top:5px;width:34px;text-align:center;">ETH</div>
<div style="left:835px;top:4px;width:1px;height:13px;background:#c4c4cc"></div>
<div style="left:836px;top:4px;width:1px;height:13px;background:#ffffff"></div>
<div style="left:836px;top:21px;width:30px;height:17px;background:#e8e8f0"></div>
<div class="t" style="left:837px;top:23px;width:29px;text-align:center;">3</div>
<div style="left:836px;top:39px;width:30px;height:17px;background:#eaf0fd"></div>
<div style="left:836px;top:57px;width:30px;height:17px;background:#ffffff"></div>
<div style="left:836px;top:75px;width:30px;height:17px;background:#eaf0fd"></div>
<div style="left:836px;top:93px;width:30px;height:17px;background:#e8e8f0"></div>
<div style="left:836px;top:111px;width:30px;height:17px;background:#cad9f5"></div>
<div style="left:836px;top:129px;width:30px;height:17px;background:#e8e8f0"></div>
<div style="left:836px;top:147px;width:30px;height:17px;background:#cad9f5"></div>
<div class="t" style="left:835px;top:5px;width:30px;text-align:center;">M</div>
<div style="left:865px;top:4px;width:1px;height:13px;background:#c4c4cc"></div>
<div style="left:866px;top:4px;width:1px;height:13px;background:#ffffff"></div>
<div style="left:866px;top:21px;width:30px;height:17px;background:#e8e8f0"></div>
<div class="t" style="left:867px;top:23px;width:29px;text-align:center;">3</div>
<div style="left:866px;top:39px;width:30px;height:17px;background:#eaf0fd"></div>
<div style="left:866px;top:57px;width:30px;height:17px;background:#ffffff"></div>
<div style="left:866px;top:75px;width:30px;height:17px;background:#eaf0fd"></div>
<div style="left:866px;top:93px;width:30px;height:17px;background:#e8e8f0"></div>
<div style="left:866px;top:111px;width:30px;height:17px;background:#cad9f5"></div>
<div style="left:866px;top:129px;width:30px;height:17px;background:#e8e8f0"></div>
<div style="left:866px;top:147px;width:30px;height:17px;background:#cad9f5"></div>
<div class="t" style="left:865px;top:5px;width:30px;text-align:center;">CH</div>
<div style="left:895px;top:4px;width:1px;height:13px;background:#c4c4cc"></div>
<div style="left:896px;top:4px;width:1px;height:13px;background:#ffffff"></div>
<div style="left:896px;top:21px;width:30px;height:17px;background:#e8e8f0"></div>
<div class="t" style="left:897px;top:23px;width:29px;text-align:center;">3</div>
<div style="left:896px;top:39px;width:30px;height:17px;background:#eaf0fd"></div>
<div style="left:896px;top:57px;width:30px;height:17px;background:#ffffff"></div>
<div style="left:896px;top:75px;width:30px;height:17px;background:#eaf0fd"></div>
<div style="left:896px;top:93px;width:30px;height:17px;background:#e8e8f0"></div>
<div style="left:896px;top:111px;width:30px;height:17px;background:#cad9f5"></div>
<div style="left:896px;top:129px;width:30px;height:17px;background:#e8e8f0"></div>
<div style="left:896px;top:147px;width:30px;height:17px;background:#cad9f5"></div>
<div class="t" style="left:895px;top:5px;width:30px;text-align:center;">PH</div>
<div style="left:927px;top:1px;width:32px;height:17px;background:#fdfdc9"></div>
<div style="left:925px;top:4px;width:1px;height:13px;background:#c4c4cc"></div>
<div style="left:926px;top:4px;width:1px;height:13px;background:#ffffff"></div>
<div style="left:926px;top:21px;width:33px;height:17px;background:#f8f8e7"></div>
<div class="t" style="left:927px;top:23px;width:32px;text-align:center;">3</div>
<div style="left:926px;top:39px;width:33px;height:17px;background:#e8efd9"></div>
<div class="t" style="left:927px;top:41px;width:32px;text-align:center;">P</div>
<div style="left:926px;top:57px;width:33px;height:17px;background:#ffffcc"></div>
<div class="t" style="left:927px;top:59px;width:32px;text-align:center;">m1</div>
<div style="left:926px;top:75px;width:33px;height:17px;background:#e8efd9"></div>
<div style="left:926px;top:93px;width:33px;height:17px;background:#f8f8e7"></div>
<div class="t" style="left:927px;top:95px;width:32px;text-align:center;">X</div>
<div style="left:926px;top:111px;width:33px;height:17px;background:#d9e2ec"></div>
<div class="t" style="left:927px;top:113px;width:32px;text-align:center;">X</div>
<div style="left:926px;top:129px;width:33px;height:17px;background:#f8f8e7"></div>
<div class="t" style="left:927px;top:131px;width:32px;text-align:center;">X</div>
<div style="left:926px;top:147px;width:33px;height:17px;background:#d9e2ec"></div>
<div class="t" style="left:927px;top:149px;width:32px;text-align:center;">X</div>
<div class="t" style="left:925px;top:5px;width:33px;text-align:center;">BIO</div>
<div style="left:958px;top:4px;width:1px;height:13px;background:#c4c4cc"></div>
<div style="left:959px;top:4px;width:1px;height:13px;background:#ffffff"></div>
<div style="left:959px;top:21px;width:33px;height:17px;background:#e8e8f0"></div>
<div class="t" style="left:960px;top:23px;width:32px;text-align:center;">3</div>
<div style="left:959px;top:39px;width:33px;height:17px;background:#eaf0fd"></div>
<div style="left:959px;top:57px;width:33px;height:17px;background:#ffffff"></div>
<div style="left:959px;top:75px;width:33px;height:17px;background:#eaf0fd"></div>
<div style="left:959px;top:93px;width:33px;height:17px;background:#e8e8f0"></div>
<div style="left:959px;top:111px;width:33px;height:17px;background:#cad9f5"></div>
<div style="left:959px;top:129px;width:33px;height:17px;background:#e8e8f0"></div>
<div style="left:959px;top:147px;width:33px;height:17px;background:#cad9f5"></div>
<div class="t" style="left:958px;top:5px;width:33px;text-align:center;">INF</div>
<div style="left:990px;top:4px;width:1px;height:13px;background:#c4c4cc"></div>
<div style="left:991px;top:4px;width:1px;height:13px;background:#ffffff"></div>
<div style="left:992px;top:21px;width:35px;height:17px;background:#e8e8f0"></div>
<div class="t" style="left:993px;top:23px;width:34px;text-align:center;">3</div>
<div style="left:992px;top:39px;width:35px;height:17px;background:#eaf0fd"></div>
<div style="left:992px;top:57px;width:35px;height:17px;background:#ffffff"></div>
<div class="t" style="left:993px;top:59px;width:34px;text-align:center;">x</div>
<div style="left:992px;top:75px;width:35px;height:17px;background:#eaf0fd"></div>
<div style="left:992px;top:93px;width:35px;height:17px;background:#e8e8f0"></div>
<div class="t" style="left:993px;top:95px;width:34px;text-align:center;">X</div>
<div style="left:992px;top:111px;width:35px;height:17px;background:#cad9f5"></div>
<div class="t" style="left:993px;top:113px;width:34px;text-align:center;">X</div>
<div style="left:992px;top:129px;width:35px;height:17px;background:#e8e8f0"></div>
<div class="t" style="left:993px;top:131px;width:34px;text-align:center;">X</div>
<div style="left:992px;top:147px;width:35px;height:17px;background:#cad9f5"></div>
<div class="t" style="left:993px;top:149px;width:34px;text-align:center;">X</div>
<div class="t" style="left:991px;top:5px;width:35px;text-align:center;">NWT</div>
<div style="left:1028px;top:4px;width:1px;height:13px;background:#c4c4cc"></div>
<div style="left:1029px;top:4px;width:1px;height:13px;background:#ffffff"></div>
<div style="left:1027px;top:21px;width:37px;height:17px;background:#e8e8f0"></div>
<div class="t" style="left:1028px;top:23px;width:36px;text-align:center;">2</div>
<div style="left:1027px;top:39px;width:37px;height:17px;background:#eaf0fd"></div>
<div class="t" style="left:1028px;top:41px;width:36px;text-align:center;">P</div>
<div style="left:1027px;top:57px;width:37px;height:17px;background:#ffffff"></div>
<div class="t" style="left:1028px;top:59px;width:36px;text-align:center;">f</div>
<div style="left:1027px;top:75px;width:37px;height:17px;background:#eaf0fd"></div>
<div style="left:1027px;top:93px;width:37px;height:17px;background:#ffffff"></div>
<div class="t" style="left:1028px;top:95px;width:36px;text-align:center;">X</div>
<div style="left:1027px;top:111px;width:37px;height:17px;background:#eaf0fd"></div>
<div class="t" style="left:1028px;top:113px;width:36px;text-align:center;">X</div>
<div style="left:1027px;top:129px;width:37px;height:17px;background:#ffffff"></div>
<div class="t" style="left:1028px;top:131px;width:36px;text-align:center;">X</div>
<div style="left:1027px;top:147px;width:37px;height:17px;background:#eaf0fd"></div>
<div class="t" style="left:1028px;top:149px;width:36px;text-align:center;">X</div>
<div class="t" style="left:1026px;top:5px;width:37px;text-align:center;">SPO</div>
<div style="left:1063px;top:4px;width:1px;height:13px;background:#c4c4cc"></div>
<div style="left:1064px;top:4px;width:1px;height:13px;background:#ffffff"></div>
<div style="left:1064px;top:21px;width:30px;height:17px;background:#e8e8f0"></div>
<div class="t" style="left:1065px;top:23px;width:29px;text-align:center;">3</div>
<div style="left:1064px;top:39px;width:30px;height:17px;background:#eaf0fd"></div>
<div style="left:1064px;top:57px;width:30px;height:17px;background:#ffffff"></div>
<div style="left:1064px;top:75px;width:30px;height:17px;background:#eaf0fd"></div>
<div style="left:1064px;top:93px;width:30px;height:17px;background:#e8e8f0"></div>
<div style="left:1064px;top:111px;width:30px;height:17px;background:#cad9f5"></div>
<div style="left:1064px;top:129px;width:30px;height:17px;background:#e8e8f0"></div>
<div style="left:1064px;top:147px;width:30px;height:17px;background:#cad9f5"></div>
<div class="t" style="left:1063px;top:5px;width:30px;text-align:center;">GK</div>
<div style="left:1093px;top:4px;width:1px;height:13px;background:#c4c4cc"></div>
<div style="left:1094px;top:4px;width:1px;height:13px;background:#ffffff"></div>
<div style="left:1094px;top:21px;width:36px;height:17px;background:#e8e8f0"></div>
<div class="t" style="left:1095px;top:23px;width:35px;text-align:center;">3</div>
<div style="left:1094px;top:39px;width:36px;height:17px;background:#eaf0fd"></div>
<div style="left:1094px;top:57px;width:36px;height:17px;background:#ffffff"></div>
<div style="left:1094px;top:75px;width:36px;height:17px;background:#eaf0fd"></div>
<div style="left:1094px;top:93px;width:36px;height:17px;background:#e8e8f0"></div>
<div style="left:1094px;top:111px;width:36px;height:17px;background:#cad9f5"></div>
<div style="left:1094px;top:129px;width:36px;height:17px;background:#e8e8f0"></div>
<div style="left:1094px;top:147px;width:36px;height:17px;background:#cad9f5"></div>
<div class="t" style="left:1093px;top:5px;width:36px;text-align:center;">GEO</div>
<div style="left:1129px;top:4px;width:1px;height:13px;background:#c4c4cc"></div>
<div style="left:1130px;top:4px;width:1px;height:13px;background:#ffffff"></div>
<div style="left:1130px;top:21px;width:37px;height:17px;background:#e8e8f0"></div>
<div style="left:1130px;top:39px;width:37px;height:17px;background:#eaf0fd"></div>
<div style="left:1130px;top:57px;width:37px;height:17px;background:#ffffff"></div>
<div style="left:1130px;top:75px;width:37px;height:17px;background:#eaf0fd"></div>
<div style="left:1130px;top:93px;width:37px;height:17px;background:#e8e8f0"></div>
<div style="left:1130px;top:111px;width:37px;height:17px;background:#cad9f5"></div>
<div style="left:1130px;top:129px;width:37px;height:17px;background:#e8e8f0"></div>
<div style="left:1130px;top:147px;width:37px;height:17px;background:#cad9f5"></div>
<div class="t" style="left:1129px;top:5px;width:37px;text-align:center;">SPO</div>
<div style="left:100px;top:21px;width:1px;height:143px;background:#acacb4"></div>
<div style="left:108px;top:21px;width:1px;height:143px;background:#acacb4"></div>
<div style="left:138px;top:21px;width:1px;height:143px;background:#acacb4"></div>
<div style="left:187px;top:21px;width:1px;height:143px;background:#acacb4"></div>
<div style="left:228px;top:21px;width:1px;height:143px;background:#acacb4"></div>
<div style="left:280px;top:21px;width:1px;height:143px;background:#acacb4"></div>
<div style="left:316px;top:21px;width:1px;height:143px;background:#acacb4"></div>
<div style="left:346px;top:21px;width:1px;height:143px;background:#acacb4"></div>
<div style="left:376px;top:21px;width:1px;height:143px;background:#acacb4"></div>
<div style="left:406px;top:21px;width:1px;height:143px;background:#acacb4"></div>
<div style="left:436px;top:21px;width:1px;height:143px;background:#acacb4"></div>
<div style="left:466px;top:21px;width:1px;height:143px;background:#acacb4"></div>
<div style="left:500px;top:21px;width:1px;height:143px;background:#acacb4"></div>
<div style="left:540px;top:21px;width:1px;height:143px;background:#acacb4"></div>
<div style="left:570px;top:21px;width:1px;height:143px;background:#acacb4"></div>
<div style="left:606px;top:21px;width:1px;height:143px;background:#acacb4"></div>
<div style="left:636px;top:21px;width:1px;height:143px;background:#acacb4"></div>
<div style="left:665px;top:21px;width:1px;height:143px;background:#acacb4"></div>
<div style="left:696px;top:21px;width:1px;height:143px;background:#acacb4"></div>
<div style="left:732px;top:21px;width:1px;height:143px;background:#acacb4"></div>
<div style="left:767px;top:21px;width:1px;height:143px;background:#acacb4"></div>
<div style="left:802px;top:21px;width:1px;height:143px;background:#acacb4"></div>
<div style="left:836px;top:21px;width:1px;height:143px;background:#acacb4"></div>
<div style="left:866px;top:21px;width:1px;height:143px;background:#acacb4"></div>
<div style="left:896px;top:21px;width:1px;height:143px;background:#acacb4"></div>
<div style="left:926px;top:21px;width:1px;height:143px;background:#acacb4"></div>
<div style="left:959px;top:21px;width:1px;height:143px;background:#acacb4"></div>
<div style="left:990px;top:21px;width:1px;height:143px;background:#acacb4"></div>
<div style="left:1027px;top:21px;width:1px;height:143px;background:#acacb4"></div>
<div style="left:1064px;top:21px;width:1px;height:143px;background:#acacb4"></div>
<div style="left:1094px;top:21px;width:1px;height:143px;background:#acacb4"></div>
<div style="left:1130px;top:21px;width:1px;height:143px;background:#acacb4"></div>
<div style="left:0px;top:38px;width:1147px;height:1px;background:#acacb4"></div>
<div style="left:0px;top:56px;width:1147px;height:1px;background:#acacb4"></div>
<div style="left:0px;top:74px;width:1147px;height:1px;background:#acacb4"></div>
<div style="left:0px;top:92px;width:1147px;height:1px;background:#acacb4"></div>
<div style="left:0px;top:110px;width:1147px;height:1px;background:#acacb4"></div>
<div style="left:0px;top:128px;width:1147px;height:1px;background:#acacb4"></div>
<div style="left:0px;top:146px;width:1147px;height:1px;background:#acacb4"></div>
<div style="left:0px;top:164px;width:1147px;height:1px;background:#acacb4"></div>
<div style="left:0px;top:0px;width:1147px;height:1px;background:#a8a8b0"></div>
<div style="left:0px;top:0px;width:1px;height:328px;background:#a8a8b0"></div>
<div style="left:101px;top:312px;width:1046px;height:16px;background:#fcfcff"></div>
<div style="left:101px;top:312px;width:17px;height:16px;box-sizing:border-box;border:1px solid #a8b8dc;border-radius:2px;background:linear-gradient(#f4f6ff,#c8d4f4 55%,#aab6da)"></div>
<svg style="left:105px;top:315px" width="9" height="10"><path d="M7.3 1L3 4.9L7.3 8.8" stroke="#3c5070" stroke-width="2.3" fill="none"/></svg>
<div style="left:1130px;top:312px;width:17px;height:16px;box-sizing:border-box;border:1px solid #a8b8dc;border-radius:2px;background:linear-gradient(#f4f6ff,#c8d4f4 55%,#aab6da)"></div>
<svg style="left:1134px;top:315px" width="9" height="10"><path d="M2.7 1L7 4.9L2.7 8.8" stroke="#3c5070" stroke-width="2.3" fill="none"/></svg>
<div style="left:620px;top:312px;width:469px;height:16px;box-sizing:border-box;border:1px solid #a8b8dc;border-radius:2px;background:linear-gradient(#f4f6ff,#c4d4f8 40%,#a8b4d8 90%,#fff 92%)"></div>
<div style="left:851px;top:316px;width:1px;height:8px;background:#ffffff"></div>
<div style="left:853px;top:316px;width:1px;height:8px;background:#ffffff"></div>
<div style="left:855px;top:316px;width:1px;height:8px;background:#ffffff"></div>
<div style="left:857px;top:316px;width:1px;height:8px;background:#ffffff"></div>
</div>
<div style="left:8px;top:510px;width:1148px;height:1px;background:#ffffff;"></div>
<div style="left:1155px;top:182px;width:1px;height:329px;background:#ffffff;"></div>
<div style="left:1168px;top:182px;width:174px;height:329px;box-sizing:border-box;border-left:1px solid #a8a8b0;border-top:1px solid #a8a8b0;border-right:1px solid #fff;border-bottom:1px solid #fff;background:#f1f1fd"></div>
<div style="left:1169px;top:200px;width:112px;height:3px;background:linear-gradient(#e2e2ea,#c4c4cc 60%,#b4b4bc)"></div>
<div style="left:1244px;top:183px;width:37px;height:17px;background:#fdfdc9;"></div>
<div style="left:1242px;top:186px;width:1px;height:13px;background:#c4c4cc;"></div>
<div class="t" style="left:1169px;top:187px;">AG</div>
<div class="t" style="left:1244px;top:187px;width:37px;text-align:center;">Chor</div>
<div style="left:1169px;top:203px;width:74px;height:17px;background:#e8e8f0;"></div>
<div style="left:1244px;top:203px;width:37px;height:17px;background:#e8e8f0;"></div>
<div class="t" style="left:1171px;top:205px;">Wochenstun...</div>
<div class="t" style="left:1244px;top:205px;width:37px;text-align:center;">2</div>
<div style="left:1169px;top:221px;width:74px;height:17px;background:#cad9f5;"></div>
<div style="left:1244px;top:221px;width:37px;height:17px;background:#cad9f5;"></div>
<div style="left:1169px;top:239px;width:74px;height:17px;background:#e8e8f0;"></div>
<div style="left:1244px;top:239px;width:37px;height:17px;background:#e8e8f0;"></div>
<div style="left:1169px;top:257px;width:74px;height:17px;background:#cad9f5;"></div>
<div style="left:1244px;top:257px;width:37px;height:17px;background:#cad9f5;"></div>
<div style="left:1169px;top:275px;width:74px;height:17px;background:#e8e8f0;"></div>
<div style="left:1244px;top:275px;width:37px;height:17px;background:#ffffcc;"></div>
<div class="t" style="left:1169px;top:277px;width:74px;text-align:center;">1.1</div>
<div class="t" style="left:1244px;top:277px;width:37px;text-align:center;">T</div>
<div style="left:1169px;top:293px;width:74px;height:17px;background:#cad9f5;"></div>
<div style="left:1244px;top:293px;width:37px;height:17px;background:#e8efd9;"></div>
<div class="t" style="left:1169px;top:295px;width:74px;text-align:center;">1.2</div>
<div class="t" style="left:1244px;top:295px;width:37px;text-align:center;">T</div>
<div style="left:1169px;top:311px;width:74px;height:17px;background:#e8e8f0;"></div>
<div style="left:1244px;top:311px;width:37px;height:17px;background:#ffffcc;"></div>
<div class="t" style="left:1169px;top:313px;width:74px;text-align:center;">2.1</div>
<div style="left:1169px;top:329px;width:74px;height:17px;background:#cad9f5;"></div>
<div style="left:1244px;top:329px;width:37px;height:17px;background:#e8efd9;"></div>
<div class="t" style="left:1169px;top:331px;width:74px;text-align:center;">2.2</div>
<div style="left:1169px;top:220px;width:112px;height:1px;background:#acacb4;"></div>
<div style="left:1169px;top:238px;width:112px;height:1px;background:#acacb4;"></div>
<div style="left:1169px;top:256px;width:112px;height:1px;background:#acacb4;"></div>
<div style="left:1169px;top:274px;width:112px;height:1px;background:#acacb4;"></div>
<div style="left:1169px;top:292px;width:112px;height:1px;background:#acacb4;"></div>
<div style="left:1169px;top:310px;width:112px;height:1px;background:#acacb4;"></div>
<div style="left:1169px;top:328px;width:112px;height:1px;background:#acacb4;"></div>
<div style="left:1169px;top:346px;width:112px;height:1px;background:#acacb4;"></div>
<div style="left:1243px;top:203px;width:1px;height:143px;background:#acacb4;"></div>
<div style="left:1281px;top:203px;width:1px;height:143px;background:#acacb4;"></div>
<div style="left:8px;top:529px;width:9px;height:1px;background:#a0a0a8;"></div>
<div style="left:8px;top:530px;width:9px;height:1px;background:#fff;"></div>
<div class="t" style="left:19px;top:523px;letter-spacing:0.15px">Abiturprüfungsfächer</div>
<div style="left:127px;top:529px;width:486px;height:1px;background:#a0a0a8;"></div>
<div style="left:127px;top:530px;width:486px;height:1px;background:#fff;"></div>
<div style="left:625px;top:529px;width:9px;height:1px;background:#a0a0a8;"></div>
<div style="left:625px;top:530px;width:9px;height:1px;background:#fff;"></div>
<div class="t" style="left:635px;top:523px;letter-spacing:0.2px">Übersicht</div>
<div style="left:686px;top:529px;width:657px;height:1px;background:#a0a0a8;"></div>
<div style="left:686px;top:530px;width:657px;height:1px;background:#fff;"></div>
<div style="left:14px;top:540px;width:593px;height:343px;box-sizing:border-box;border-left:1px solid #a8a8b0;border-top:1px solid #a8a8b0;border-right:1px solid #fff;border-bottom:1px solid #fff;background:#e8e8f0"></div>
<div style="left:15px;top:541px;width:590px;height:14px;background:#f1f1fd;"></div>
<div style="left:15px;top:553px;width:590px;height:3px;background:linear-gradient(#e2e2ea,#c4c4cc 60%,#b4b4bc)"></div>
<div style="left:309px;top:543px;width:1px;height:11px;background:#c4c4cc;"></div>
<div style="left:604px;top:543px;width:1px;height:11px;background:#c4c4cc;"></div>
<div style="left:15px;top:556px;width:590px;height:17px;background:#e8e8f0;"></div>
<div style="left:15px;top:573px;width:590px;height:1px;background:#acacb4;"></div>
<div class="t" style="left:16px;top:558px;">1. schriftliche Prüfungsfach</div>
<div class="t" style="left:311px;top:558px;">Mathematik</div>
<div style="left:15px;top:574px;width:590px;height:17px;background:#cad9f5;"></div>
<div style="left:15px;top:591px;width:590px;height:1px;background:#acacb4;"></div>
<div class="t" style="left:16px;top:576px;">2. schriftliche Prüfungsfach</div>
<div class="t" style="left:311px;top:576px;">Deutsch</div>
<div style="left:15px;top:592px;width:590px;height:17px;background:#e8e8f0;"></div>
<div style="left:15px;top:609px;width:590px;height:1px;background:#acacb4;"></div>
<div class="t" style="left:16px;top:594px;">3. schriftliche Prüfungsfach</div>
<div class="t" style="left:311px;top:594px;">Chemie</div>
<div style="left:15px;top:610px;width:590px;height:17px;background:#cad9f5;"></div>
<div style="left:15px;top:627px;width:590px;height:1px;background:#acacb4;"></div>
<div class="t" style="left:16px;top:612px;">1. mündliches Prüfungsfach</div>
<div class="t" style="left:311px;top:612px;">Biologie</div>
<div style="left:15px;top:628px;width:590px;height:17px;background:#e8e8f0;"></div>
<div style="left:15px;top:645px;width:590px;height:1px;background:#acacb4;"></div>
<div class="t" style="left:16px;top:630px;">2. mündliches Prüfungsfach</div>
<div class="t" style="left:311px;top:630px;">Evang.Religionslehre</div>
<div style="left:310px;top:556px;width:1px;height:90px;background:#acacb4;"></div>
<div style="left:605px;top:556px;width:1px;height:90px;background:#acacb4;"></div>
<div class="t" style="left:853px;top:563px;">Anzahl Kurse</div>
<div style="left:929px;top:560px;width:40px;height:19px;border:1px solid #8ea4c4;box-sizing:border-box;background:#f4f4fd"></div>
<div class="t" style="left:929px;top:563px;width:36px;text-align:right;">56</div>
<div class="t" style="left:856px;top:586px;width:259px;text-align:center;letter-spacing:0.05px">Wochenstunden</div>
<div style="left:854px;top:601px;width:259px;height:40px;box-sizing:border-box;border-left:1px solid #a8a8b0;border-top:1px solid #a8a8b0;border-bottom:1px solid #fff;background:#f1f1fd"></div>
<div style="left:855px;top:618px;width:258px;height:3px;background:linear-gradient(#e2e2ea,#c4c4cc 60%,#b4b4bc)"></div>
<div style="left:855px;top:621px;width:43px;height:18px;background:#e8e8f0;"></div>
<div class="t" style="left:855px;top:606px;">1.1</div>
<div class="t" style="left:855px;top:624px;width:40px;text-align:right;">43</div>
<div style="left:898px;top:621px;width:43px;height:18px;background:#e8e8f0;"></div>
<div style="left:896px;top:604px;width:1px;height:13px;background:#c4c4cc;"></div>
<div class="t" style="left:898px;top:606px;">1.2</div>
<div class="t" style="left:898px;top:624px;width:40px;text-align:right;">43</div>
<div style="left:941px;top:621px;width:43px;height:18px;background:#e8e8f0;"></div>
<div style="left:939px;top:604px;width:1px;height:13px;background:#c4c4cc;"></div>
<div class="t" style="left:941px;top:606px;">2.1</div>
<div class="t" style="left:941px;top:624px;width:40px;text-align:right;">42</div>
<div style="left:984px;top:621px;width:43px;height:18px;background:#e8e8f0;"></div>
<div style="left:982px;top:604px;width:1px;height:13px;background:#c4c4cc;"></div>
<div class="t" style="left:984px;top:606px;">2.2</div>
<div class="t" style="left:984px;top:624px;width:40px;text-align:right;">42</div>
<div style="left:1027px;top:621px;width:43px;height:18px;background:#e8e8f0;"></div>
<div style="left:1025px;top:604px;width:1px;height:13px;background:#c4c4cc;"></div>
<div class="t" style="left:1027px;top:606px;">Summe</div>
<div class="t" style="left:1027px;top:624px;width:40px;text-align:right;">85</div>
<div style="left:1070px;top:621px;width:43px;height:18px;background:#e8e8f0;"></div>
<div style="left:1068px;top:604px;width:1px;height:13px;background:#c4c4cc;"></div>
<div class="t" style="left:1070px;top:606px;">AGs</div>
<div class="t" style="left:1070px;top:624px;width:40px;text-align:right;">4</div>
<div style="left:1111px;top:604px;width:1px;height:13px;background:#c4c4cc;"></div>
<div style="left:897px;top:621px;width:1px;height:18px;background:#acacb4;"></div>
<div style="left:940px;top:621px;width:1px;height:18px;background:#acacb4;"></div>
<div style="left:983px;top:621px;width:1px;height:18px;background:#acacb4;"></div>
<div style="left:1026px;top:621px;width:1px;height:18px;background:#acacb4;"></div>
<div style="left:1069px;top:621px;width:1px;height:18px;background:#acacb4;"></div>
<div style="left:1112px;top:621px;width:1px;height:18px;background:#acacb4;"></div>
<div style="left:855px;top:639px;width:258px;height:1px;background:#acacb4;"></div>
<div style="left:632px;top:682px;width:687px;height:200px;background:#00ff00;"></div>
<div style="left:1319px;top:682px;width:18px;height:201px;box-sizing:border-box;border-right:1px solid #c8c8d4;border-top:1px solid #c8c8d4;border-bottom:1px solid #c8c8d4;background:#fdfdff"></div>
<div style="left:1322px;top:683px;width:12px;height:15px;background:linear-gradient(#fafafa,#dcdce0)"></div>
<svg style="left:1322px;top:685px" width="12" height="10"><path d="M2 7L6 3L10 7" stroke="#c8c8c8" stroke-width="2" fill="none"/></svg>
<div style="left:1322px;top:865px;width:12px;height:16px;background:linear-gradient(#fafafa,#dcdce0)"></div>
<svg style="left:1322px;top:869px" width="12" height="10"><path d="M2 3L6 7L10 3" stroke="#c8c8c8" stroke-width="2" fill="none"/></svg>
<div class="t" style="left:632px;top:683px;letter-spacing:-0.14px">Engel, Angel, G8, AGVO21</div>
<div class="t" style="left:633px;top:697px;letter-spacing:0.15px">+ Prüfung erfolgreich</div>
<div class="t" style="left:635px;top:711px;letter-spacing:-0.17px">-- REL/ETH: REV (m2) [Eingangsklasse H: REV 3, J: REV 2]</div>
<div class="t" style="left:635px;top:725px;letter-spacing:-0.05px">-- NWT (3): NWT [Eingangsklasse J: 2]</div>
<div class="t" style="left:632px;top:753px;letter-spacing:0px">Vorläufige Prüfungsfachkombination OK</div>
<div style="left:51px;top:3px;width:140px;height:26px;box-sizing:border-box;border:2px solid #ff0000;box-shadow:3px 3px 4px rgba(0,0,0,.35), inset 2px 2px 3px rgba(0,0,0,.25)"></div>
<div style="left:72px;top:131px;width:58px;height:24px;box-sizing:border-box;border:2px solid #ff0000;box-shadow:3px 3px 4px rgba(0,0,0,.35), inset 2px 2px 3px rgba(0,0,0,.25)"></div>
<div style="left:643px;top:180px;width:30px;height:168px;box-sizing:border-box;border:2px solid #ff0000;box-shadow:3px 3px 4px rgba(0,0,0,.35), inset 2px 2px 3px rgba(0,0,0,.25)"></div>
<div style="left:671px;top:180px;width:33px;height:169px;box-sizing:border-box;border:2px solid #ff0000;box-shadow:3px 3px 4px rgba(0,0,0,.35), inset 2px 2px 3px rgba(0,0,0,.25)"></div>
<div style="left:776px;top:182px;width:36px;height:166px;box-sizing:border-box;border:2px solid #ff0000;box-shadow:3px 3px 4px rgba(0,0,0,.35), inset 2px 2px 3px rgba(0,0,0,.25)"></div>
<div style="left:997px;top:182px;width:41px;height:167px;box-sizing:border-box;border:2px solid #ff0000;box-shadow:3px 3px 4px rgba(0,0,0,.35), inset 2px 2px 3px rgba(0,0,0,.25)"></div>
<div style="left:629px;top:709px;width:310px;height:34px;box-sizing:border-box;border:2px solid #ff0000;box-shadow:3px 3px 4px rgba(0,0,0,.35), inset 2px 2px 3px rgba(0,0,0,.25)"></div>
</body></html>
